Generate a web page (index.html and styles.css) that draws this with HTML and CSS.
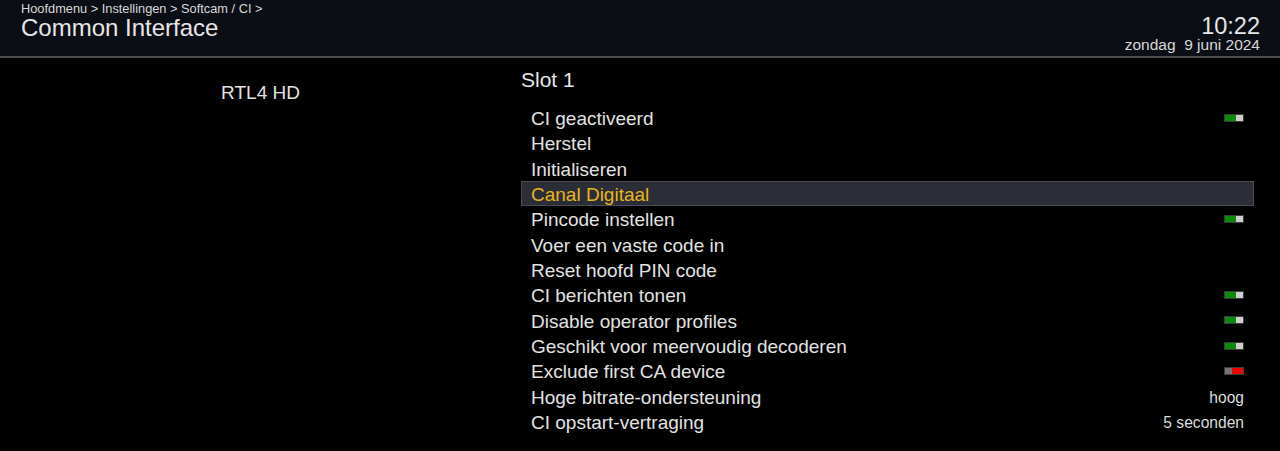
FILE: index.html
```html
<!DOCTYPE html>
<html>
<head>
<meta charset="utf-8">
<link rel="stylesheet" href="styles.css">
</head>
<body>
<div class="header">
  <div class="titles">
    <div class="crumb">Hoofdmenu &gt; Instellingen &gt; Softcam / CI &gt;</div>
    <div class="title">Common Interface</div>
  </div>
  <div class="clock">
    <div class="time">10:22</div>
    <div class="date">zondag&nbsp; 9 juni 2024</div>
  </div>
</div>
<div class="main">
  <div class="left">
    <div class="service">RTL4 HD</div>
  </div>
  <div class="right">
    <div class="slot">Slot 1</div>
    <div class="list">
      <div class="row"><span>CI geactiveerd</span><span class="tog on"></span></div>
      <div class="row"><span>Herstel</span></div>
      <div class="row"><span>Initialiseren</span></div>
      <div class="row sel"><span>Canal Digitaal</span></div>
      <div class="row"><span>Pincode instellen</span><span class="tog on"></span></div>
      <div class="row"><span>Voer een vaste code in</span></div>
      <div class="row"><span>Reset hoofd PIN code</span></div>
      <div class="row"><span>CI berichten tonen</span><span class="tog on"></span></div>
      <div class="row"><span>Disable operator profiles</span><span class="tog on"></span></div>
      <div class="row"><span>Geschikt voor meervoudig decoderen</span><span class="tog on"></span></div>
      <div class="row"><span>Exclude first CA device</span><span class="tog off"></span></div>
      <div class="row"><span>Hoge bitrate-ondersteuning</span><span class="val">hoog</span></div>
      <div class="row"><span>CI opstart-vertraging</span><span class="val">5 seconden</span></div>
    </div>
  </div>
</div>
</body>
</html>
```
FILE: styles.css
```css
html, body {
  margin: 0;
  padding: 0;
  background: #000;
  width: 1280px;
  height: 451px;
  overflow: hidden;
  font-family: "Liberation Sans", Arial, sans-serif;
  color: #e2e2e2;
}
.header {
  height: 56px;
  background: #0c0e16;
  border-bottom: 2px solid #4c4d52;
  display: flex;
  justify-content: space-between;
  padding: 0 20px 0 21px;
}
.crumb {
  font-size: 12.8px;
  line-height: 14px;
  padding-top: 2px;
  color: #d8d8d8;
}
.title {
  font-size: 24px;
  line-height: 24px;
  color: #e6e6e6;
}
.clock {
  padding-top: 14px;
  text-align: right;
}
.time {
  font-size: 23.5px;
  line-height: 24px;
  color: #e6e6e6;
}
.date {
  font-size: 15.5px;
  line-height: 14px;
  color: #d8d8d8;
}
.main {
  display: flex;
}
.left {
  width: 521px;
  text-align: center;
  padding-top: 23px;
}
.service {
  font-size: 19px;
  line-height: 24px;
}
.right {
  width: 733px;
  padding-top: 10px;
}
.slot {
  font-size: 21px;
  line-height: 24px;
  color: #e6e6e6;
}
.list {
  margin-top: 13px;
}
.row {
  height: 25.33px;
  line-height: 25.33px;
  font-size: 19px;
  padding: 0 10px;
  display: flex;
  justify-content: space-between;
  align-items: center;
  box-sizing: border-box;
}
.row > span:first-child {
  position: relative;
  top: 1px;
}
.row.sel {
  background: #2c2e37;
  border: 1px solid #4a4c54;
  padding: 0 9px;
  color: #e8b41c;
}
.val {
  font-size: 15.6px;
  color: #dcdcdc;
  position: relative;
  top: 1px;
}
.tog {
  width: 20px;
  height: 8px;
  box-sizing: border-box;
  border: 1px solid #3a3a3a;
}
.tog.on {
  background: linear-gradient(to right, #0c8a0c 0, #0c8a0c 11px, #cfcfcf 11px);
}
.tog.off {
  background: linear-gradient(to right, #747474 0, #747474 7px, #ec0606 7px);
}
```
